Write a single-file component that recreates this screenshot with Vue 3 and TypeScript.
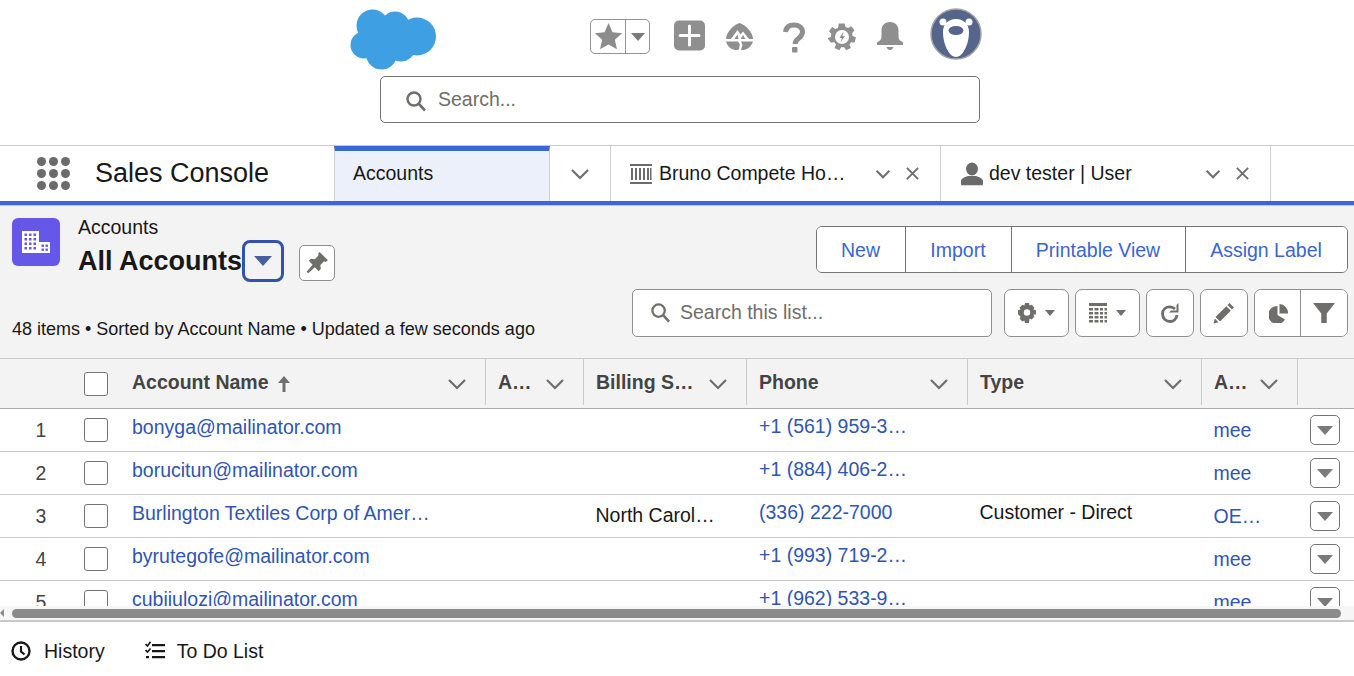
<script setup lang="ts">
// Rows of the accounts list view
interface AccountRow {
  num: number
  name: string
  billing: string
  phone: string
  type: string
  alias: string
}

const rows: AccountRow[] = [
  { num: 1, name: 'bonyga@mailinator.com', billing: '', phone: '+1 (561) 959-3…', type: '', alias: 'mee' },
  { num: 2, name: 'borucitun@mailinator.com', billing: '', phone: '+1 (884) 406-2…', type: '', alias: 'mee' },
  { num: 3, name: 'Burlington Textiles Corp of Amer…', billing: 'North Carol…', phone: '(336) 222-7000', type: 'Customer - Direct', alias: 'OE…' },
  { num: 4, name: 'byrutegofe@mailinator.com', billing: '', phone: '+1 (993) 719-2…', type: '', alias: 'mee' },
  { num: 5, name: 'cubijulozi@mailinator.com', billing: '', phone: '+1 (962) 533-9…', type: '', alias: 'mee' },
]

const columns = ['A…', 'Billing S…', 'Phone', 'Type', 'A…']
const dots = [0, 1, 2, 3, 4, 5, 6, 7, 8]
</script>

<template>
  <div class="page">
    <header class="top">
      <div class="utility">
        <svg class="logo" viewBox="345 4 100 70" width="100" height="70">
          <g fill="#3f9fe3">
            <circle cx="372.5" cy="25.5" r="16" />
            <circle cx="395" cy="26" r="14.5" />
            <circle cx="417" cy="36.5" r="19" />
            <circle cx="364" cy="45" r="13.5" />
            <circle cx="381.5" cy="54" r="15.5" />
            <circle cx="401" cy="47" r="14.5" />
            <rect x="365" y="28" width="45" height="26" />
          </g>
        </svg>
        <div class="fav">
          <span class="fav-star">
            <svg viewBox="0 0 26 26" width="29" height="29"><path d="M13 1l3.6 8.1 8.6.9-6.5 5.9 1.9 8.6L13 20.1l-7.6 4.400 1.900-8.600L.8 10l8.600-.9z" fill="#8c8c8c" /></svg>
          </span>
          <span class="fav-drop"><i class="tri tri-md"></i></span>
        </div>
        <svg class="u-plus" viewBox="0 0 32 32" width="32" height="32">
          <rect x="0" y="0.5" width="31" height="30" rx="5" fill="#8f8f8f" />
          <path d="M15.500 6v19M6 15.500h19" stroke="#fff" stroke-width="3" stroke-linecap="round" />
        </svg>
        <svg class="u-trail" viewBox="0 0 30 30" width="30" height="30">
          <path d="M1 17C1 11 8 3 14.500 1 21 3 28 11 28 17z" fill="#8f8f8f" />
          <path d="M6 17l6.500-9 3 4.500 2.500-3 6 7.500h-3.500L18 13l-2.500 4h-2L12.500 12.500 9.500 17z" fill="#fff" />
          <path d="M1 19.500h12l2 3-1.500 5.500C7 28.500 2.500 25 1 19.500zM16 19.500h12C26.500 25 21 28.500 16 28l1.500-5z" fill="#8f8f8f" />
        </svg>
        <svg class="u-help" viewBox="0 0 24 32" width="24" height="32">
          <path d="M3.500 10C4 5.500 7 3 12 3c5 0 8.500 2.800 8.500 7 0 3.300-2 5-4.300 6.700-2 1.500-3 2.800-3 5.300" fill="none" stroke="#8f8f8f" stroke-width="5" />
          <rect x="10" y="25" width="5.500" height="5.500" rx="1" fill="#8f8f8f" />
        </svg>
        <svg class="u-gear" viewBox="0 0 28 28" width="28" height="28">
          <path d="M11 1h6l.8 3.600 2.700 1.100 3.200-2 3.400 4.300-2.500 2.900.5 2.900 3.400 1.300-1.300 5.300-3.700-.2-1.700 2.400 1.600 3.300-4.900 2.400-2-3.100h-3l-2 3.100-4.900-2.400 1.600-3.300-1.700-2.400-3.700.2L-.5 16l3.400-1.300.5-2.900L.9 8.900l3.400-4.300 3.200 2 2.700-1.100z" fill="#8f8f8f" transform="translate(0 -.5) scale(.98)" />
          <circle cx="14" cy="14" r="7" fill="#fff" />
          <path d="M15.500 8.500l-4 6.500h2.500l-1.500 4.500 4.500-6.500h-2.500z" fill="#8f8f8f" />
        </svg>
        <svg class="u-bell" viewBox="0 0 28 28" width="28" height="28">
          <path d="M14 0c5.500 0 8.500 3.500 8.500 9v6c0 2.500 2 4 4.500 5.500V23H1v-2.500C3.500 19 5.500 17.500 5.500 15V9C5.500 3.500 8.500 0 14 0z" fill="#8f8f8f" />
          <path d="M10.500 25h7c-.5 1.800-2 3-3.500 3s-3-1.200-3.500-3z" fill="#8f8f8f" />
        </svg>
        <svg class="avatar" viewBox="0 0 52 52" width="52" height="52">
          <circle cx="26" cy="26" r="25" fill="#56658c" stroke="#a3a3a3" stroke-width="1.500" />
          <circle cx="13" cy="14" r="3.500" fill="#fff" />
          <circle cx="39" cy="14" r="3.500" fill="#fff" />
          <path d="M26 11c8 0 13 5.500 13 13 0 8-2.500 15-5 19-1.700 3-5 6-8 6s-6.300-3-8-6c-2.500-4-5-11-5-19 0-7.500 5-13 13-13z" fill="#fff" />
          <ellipse cx="26" cy="22.500" rx="7.500" ry="4.500" fill="#56658c" />
        </svg>
      </div>
      <div class="global-search">
        <svg viewBox="0 0 22 22" width="22" height="22"><circle cx="9" cy="9" r="6.500" fill="none" stroke="#706e6b" stroke-width="2.400" /><path d="M14 14l6 6.500" stroke="#706e6b" stroke-width="2.600" /></svg>
        <span>Search...</span>
      </div>
    </header>

    <nav class="nav">
      <div class="launcher">
        <i v-for="d in dots" :key="d"></i>
      </div>
      <div class="app-name">Sales Console</div>
      <div class="tab tab-active">Accounts</div>
      <div class="tab tab-more">
        <svg class="chev" viewBox="0 0 20 12" width="20" height="12"><path d="M2 2l8 8 8-8" /></svg>
      </div>
      <div class="tab tab-record">
        <svg viewBox="0 0 22 22" width="22" height="22" fill="#6b6b6b">
          <path d="M0 1h22v2H0zM0 19h22v2H0zM1 5h2v12H1zM5 5h2v12H5zM9 5h2v12H9zM13 5h2v12h-2zM17 5h2v12h-2zM20 5h1.500v12H20z" />
        </svg>
        <span class="tab-label">Bruno Compete Ho…</span>
        <svg class="chev small" viewBox="0 0 20 12" width="16" height="10"><path d="M2 2l8 8 8-8" /></svg>
        <svg class="close" viewBox="0 0 16 16" width="15" height="15"><path d="M2 2l12 12M14 2L2 14" /></svg>
      </div>
      <div class="tab tab-record">
        <svg viewBox="0 0 24 24" width="24" height="24" fill="#6b6b6b">
          <ellipse cx="12" cy="7" rx="6" ry="6.500" />
          <path d="M1 22v-3c0-2.500 3-3.500 7-5h8c4 1.500 7 2.500 7 5v3c0 .8-.5 1.300-1.300 1.300H2.300C1.500 23.300 1 22.800 1 22z" />
        </svg>
        <span class="tab-label user">dev tester | User</span>
        <svg class="chev small" viewBox="0 0 20 12" width="16" height="10"><path d="M2 2l8 8 8-8" /></svg>
        <svg class="close" viewBox="0 0 16 16" width="15" height="15"><path d="M2 2l12 12M14 2L2 14" /></svg>
      </div>
    </nav>

    <section class="list-head">
      <div class="head-row">
        <div class="entity">
          <svg viewBox="0 0 48 48" width="48" height="48">
            <rect width="48" height="48" rx="6" fill="#6558e8" />
            <path d="M10 13h17v22H10zM27 24h11v11H27z" fill="#fff" />
            <g fill="#6558e8">
              <rect x="12.500" y="15.500" width="2.500" height="2.500" /><rect x="17" y="15.500" width="2.500" height="2.500" /><rect x="21.500" y="15.500" width="2.500" height="2.500" />
              <rect x="12.500" y="20" width="2.500" height="2.500" /><rect x="17" y="20" width="2.500" height="2.500" /><rect x="21.500" y="20" width="2.500" height="2.500" />
              <rect x="12.500" y="24.500" width="2.500" height="2.500" /><rect x="17" y="24.500" width="2.500" height="2.500" /><rect x="21.500" y="24.500" width="2.500" height="2.500" />
              <rect x="12.500" y="29" width="2.500" height="2.500" /><rect x="17" y="29" width="2.500" height="2.500" /><rect x="21.500" y="29" width="2.500" height="2.500" />
              <rect x="29.500" y="26.500" width="2.400" height="2.400" /><rect x="33.500" y="26.500" width="2.400" height="2.400" />
              <rect x="29.500" y="30.500" width="2.400" height="2.400" /><rect x="33.500" y="30.500" width="2.400" height="2.400" />
            </g>
          </svg>
          <div class="titles">
            <div class="crumb">Accounts</div>
            <div class="title-line">
              <h1>All Accounts</h1>
              <button class="view-switch"><i class="tri tri-blue"></i></button>
              <button class="pin">
                <svg viewBox="0 0 22 22" width="24" height="24"><path d="M13.500 1l7.500 7.500-2 1.500-1.500-.5-3.500 3.500.5 3.500-2 2-3.500-3.500L3 20.500l-1.500-1.500 5.500-6.500L3.500 9l2-2 3.500.5L12.500 4l-.5-1.500z" fill="#706e6b" /></svg>
              </button>
            </div>
          </div>
        </div>
        <div class="actions">
          <button>New</button>
          <button>Import</button>
          <button>Printable View</button>
          <button>Assign Label</button>
        </div>
      </div>
      <div class="tool-row">
        <div class="status">48 items • Sorted by Account Name • Updated a few seconds ago</div>
        <div class="tools">
          <div class="list-search">
            <svg viewBox="0 0 22 22" width="21" height="21"><circle cx="9" cy="9" r="6.500" fill="none" stroke="#706e6b" stroke-width="2.400" /><path d="M14 14l6 6.500" stroke="#706e6b" stroke-width="2.600" /></svg>
            <span>Search this list...</span>
          </div>
          <button class="tool wide">
            <svg viewBox="0 0 20 20" width="20" height="20">
              <path d="M8 0h4l.6 2.600 2-.9 2.800 2.800-1 2 2.600.7v4l-2.600.6 1 2-2.800 2.800-2-1L12 20H8l-.6-2.400-2 1-2.800-2.800 1-2L1 11.200v-4l2.600-.7-1-2 2.800-2.800 2 .9z" fill="#706e6b" />
              <circle cx="10" cy="9.500" r="3.200" fill="#fff" />
            </svg>
            <i class="tri tri-sm"></i>
          </button>
          <button class="tool wide">
            <svg viewBox="0 0 20 20" width="20" height="20" fill="#706e6b">
              <path d="M1 0h18v3H1zM1 5h4v2.500H1zM6.500 5h4v2.500h-4zM12 5h3v2.500h-3zM16.500 5H19v2.500h-2.500zM1 9h4v2.500H1zM6.500 9h4v2.500h-4zM12 9h3v2.500h-3zM16.500 9H19v2.500h-2.500zM1 13h4v2.500H1zM6.500 13h4v2.500h-4zM12 13h3v2.500h-3zM16.500 13H19v2.500h-2.500zM1 17h4v2.500H1zM6.500 17h4v2.500h-4zM12 17h3v2.500h-3zM16.500 17H19v2.500h-2.500z" />
            </svg>
            <i class="tri tri-sm"></i>
          </button>
          <button class="tool">
            <svg viewBox="0 0 22 22" width="22" height="22">
              <path d="M18 13c-.5 3.700-3.300 6.500-7 6.500S3.500 16.500 3.500 12 6.800 4.800 11 4.800c2 0 3.500.7 5 2.200" fill="none" stroke="#706e6b" stroke-width="2.800" />
              <path d="M19.500 1v9.500H10l2-2h5.500V3z" fill="#706e6b" />
            </svg>
          </button>
          <button class="tool">
            <svg viewBox="0 0 22 22" width="22" height="22" fill="#706e6b">
              <path d="M16.500 1l4.500 4.500-2 2L14.500 3zM13.300 4.200l4.500 4.500L7 19.500 2.500 15zM1.800 16.500l3.700 3.700L.5 21.500z" />
            </svg>
          </button>
          <div class="tool-pair">
            <button>
              <svg viewBox="0 0 20 20" width="20" height="20" fill="#706e6b">
                <path d="M8.500 3v9l7.500 4.500A9 9 0 1 1 8.500 3zM10.500 1a9 9 0 0 1 8.500 9.500l-8.500 0z" />
              </svg>
            </button>
            <button>
              <svg viewBox="0 0 20 20" width="22" height="22" fill="#706e6b"><path d="M0 1h20l-7.500 9.500V19h-5v-8.500z" /></svg>
            </button>
          </div>
        </div>
      </div>
    </section>

    <section class="grid">
      <div class="row thead">
        <div class="cell"></div>
        <div class="cell"><span class="check"></span></div>
        <div class="cell th">
          <span>Account Name</span>
          <svg class="sort" viewBox="0 0 14 16" width="14" height="16"><path d="M7 0l6 7H8.500v9h-3V7H1z" fill="#706e6b" /></svg>
          <svg class="chev th-chev" viewBox="0 0 20 12" width="20" height="12"><path d="M2 2l8 8 8-8" /></svg>
        </div>
        <div v-for="(col, i) in columns" :key="i" class="cell th">
          <span>{{ col }}</span>
          <svg class="chev th-chev" viewBox="0 0 20 12" width="20" height="12"><path d="M2 2l8 8 8-8" /></svg>
        </div>
        <div class="cell last-head"></div>
      </div>
      <div class="tbody">
        <div v-for="row in rows" :key="row.num" class="row">
          <div class="cell num">{{ row.num }}</div>
          <div class="cell"><span class="check"></span></div>
          <div class="cell text link">{{ row.name }}</div>
          <div class="cell"></div>
          <div class="cell text billing">{{ row.billing }}</div>
          <div class="cell text link phone">{{ row.phone }}</div>
          <div class="cell text phone type">{{ row.type }}</div>
          <div class="cell text link alias">{{ row.alias }}</div>
          <div class="cell"><button class="row-action"><i class="tri tri-md"></i></button></div>
        </div>
      </div>
      <div class="scrollbar">
        <i class="scroll-left"></i>
        <div class="thumb"></div>
      </div>
    </section>

    <footer class="util-bar">
      <div class="util-item">
        <svg viewBox="0 0 20 20" width="20" height="20"><circle cx="10" cy="10" r="8.500" fill="none" stroke="#181818" stroke-width="2.400" /><path d="M10 5v5.500l3.500 3" fill="none" stroke="#181818" stroke-width="2.200" /></svg>
        <span>History</span>
      </div>
      <div class="util-item">
        <svg viewBox="0 0 20 20" width="20" height="20" fill="#181818">
          <path d="M7 3h13v2.200H7zM7 9h13v2.200H7zM7 15h13v2.200H7zM1 15h3v2.200H1z" />
          <path d="M.5 3l2 2L5.500.8" fill="none" stroke="#181818" stroke-width="1.600" />
          <path d="M.5 9l2 2 3-3.500" fill="none" stroke="#181818" stroke-width="1.600" />
        </svg>
        <span>To Do List</span>
      </div>
    </footer>
  </div>
</template>

<style>
html,
body {
  margin: 0;
  background: #fff;
}
</style>

<style scoped>
.page {
  width: 1354px;
  height: 676px;
  overflow: hidden;
  font-family: "Liberation Sans", Arial, sans-serif;
  font-size: 19.5px;
  color: #181818;
  background: #fff;
}

button {
  font-family: inherit;
  font-size: inherit;
  padding: 0;
  background: #fff;
  display: flex;
  align-items: center;
  justify-content: center;
}

.tri {
  display: block;
  width: 0;
  height: 0;
  border-style: solid;
  border-color: #706e6b transparent transparent;
}

.tri-md {
  border-width: 9px 8.5px 0;
  border-top-color: #7a7a7a;
}

.tri-sm {
  border-width: 6px 5.5px 0;
}

.tri-blue {
  border-width: 10px 9px 0;
  border-top-color: #47609f;
}

/* global header */
.top {
  height: 145px;
  border-bottom: 1px solid #c9c9c9;
  box-sizing: content-box;
}

.utility {
  display: flex;
  align-items: flex-start;
  height: 72px;
  padding: 4px 0 0 345px;
}

.fav {
  display: flex;
  width: 60px;
  height: 35px;
  box-sizing: border-box;
  margin: 15px 0 0 145px;
  border: 1px solid #939393;
  border-radius: 5px;
}

.fav-star {
  width: 34px;
  display: flex;
  align-items: center;
  justify-content: center;
  border-right: 1px solid #939393;
}

.fav-drop {
  flex: 1;
  display: flex;
  align-items: center;
  justify-content: center;
}

.fav-drop .tri {
  border-width: 8px 7.5px 0;
}

.u-plus {
  margin: 16px 0 0 24px;
}

.u-trail {
  margin: 18px 0 0 19px;
}

.u-help {
  margin: 18px 0 0 27px;
}

.u-gear {
  margin: 19px 0 0 22px;
}

.u-bell {
  margin: 18px 0 0 20px;
}

.avatar {
  margin: 4px 0 0 26px;
}

.global-search {
  display: flex;
  align-items: center;
  gap: 11px;
  width: 600px;
  height: 47px;
  box-sizing: border-box;
  margin-left: 380px;
  padding-left: 24px;
  border: 1px solid #747474;
  border-radius: 5px;
  color: #706e6b;
}

.global-search svg {
  margin-top: 3px;
}

/* app nav */
.nav {
  display: flex;
  height: 55px;
  border-bottom: 4px solid #3a66d8;
}

.launcher {
  display: grid;
  grid-template-columns: repeat(3, 9px);
  gap: 3px;
  align-content: center;
  width: 33px;
  margin-left: 37px;
}

.launcher i {
  width: 9px;
  height: 9px;
  border-radius: 50%;
  background: #6b6b6b;
}

.app-name {
  width: 239px;
  margin-left: 25px;
  font-size: 27px;
  line-height: 54px;
}

.tab {
  display: flex;
  align-items: center;
  box-sizing: border-box;
  border-right: 1px solid #d0d0d0;
}

.tab-active {
  width: 216px;
  padding: 0 0 6px 18px;
  background: #ebf0fa;
  border-top: 5px solid #3a66d8;
  border-left: 1px solid #d0d0d0;
}

.tab-more {
  width: 61px;
  justify-content: center;
}

.tab-record {
  width: 330px;
  padding-left: 19px;
}

.tab-label {
  width: 216px;
  margin-left: 7px;
  white-space: nowrap;
}

.tab-label.user {
  margin-left: 5px;
}

.chev {
  fill: none;
  stroke: #706e6b;
  stroke-width: 2.200;
}

.chev.small {
  stroke-width: 2.600;
}

.close {
  margin-left: 14px;
  fill: none;
  stroke: #706e6b;
  stroke-width: 2;
}

/* list view header */
.list-head {
  height: 154px;
  box-sizing: border-box;
  padding: 12px 6px 0 12px;
  background: #f3f3f3;
  border-top: 1px solid #c9c9c9;
  border-bottom: 1px solid #c9c9c9;
}

.head-row {
  display: flex;
  justify-content: space-between;
  height: 71px;
}

.entity {
  display: flex;
  gap: 18px;
}

.titles {
  margin-top: -1px;
}

.crumb {
  line-height: 20px;
}

.title-line {
  display: flex;
  align-items: center;
  margin-top: 3px;
  height: 42px;
}

h1 {
  margin: 0;
  font-size: 27px;
  font-weight: 700;
  line-height: 42px;
}

.view-switch {
  width: 42px;
  height: 42px;
  box-sizing: border-box;
  background: transparent;
  border: 3px solid #2f54a8;
  border-radius: 8px;
}

.pin {
  width: 36px;
  height: 36px;
  margin: 4px 0 0 15px;
  box-sizing: border-box;
  border: 1px solid #8f8f8f;
  border-radius: 5px;
}

.actions {
  display: flex;
  height: 47px;
  margin-top: 8px;
  box-sizing: border-box;
  border: 1px solid #747474;
  border-radius: 6px;
  background: #fff;
  overflow: hidden;
}

.actions button {
  border: 0;
  border-right: 1px solid #747474;
  color: #3a66d0;
  padding: 1px 1px 0 0;
}

.actions button:nth-child(1) {
  width: 89px;
}

.actions button:nth-child(2) {
  width: 106px;
}

.actions button:nth-child(3) {
  width: 174px;
}

.actions button:nth-child(4) {
  width: 161px;
  border-right: 0;
}

.tool-row {
  display: flex;
  justify-content: space-between;
  align-items: flex-end;
}

.status {
  font-size: 18px;
  line-height: 22px;
  margin-bottom: -3px;
}

.tools {
  display: flex;
  gap: 6px;
}

.list-search {
  display: flex;
  align-items: center;
  gap: 9px;
  width: 360px;
  height: 48px;
  box-sizing: border-box;
  margin-right: 6px;
  padding: 0 0 2px 17px;
  background: #fff;
  border: 1px solid #8f8f8f;
  border-radius: 5px;
  color: #706e6b;
}

.tool {
  width: 48px;
  height: 48px;
  box-sizing: border-box;
  border: 1px solid #8f8f8f;
  border-radius: 7px;
  gap: 8px;
}

.tool.wide {
  width: 65px;
  padding-right: 2px;
}

.tool-pair {
  display: flex;
  width: 94px;
  height: 48px;
  box-sizing: border-box;
  background: #fff;
  border: 1px solid #8f8f8f;
  border-radius: 7px;
  overflow: hidden;
}

.tool-pair button {
  flex: 1;
  border: 0;
}

.tool-pair button:first-child {
  flex: 0 0 46px;
  padding-left: 3px;
  border-right: 1px solid #8f8f8f;
}

/* table */
.grid {
  height: 263px;
  border-bottom: 2px solid #c9c9c9;
  box-sizing: border-box;
}

.row {
  display: grid;
  grid-template-columns: 70px 50px 366px 98px 163px 221px 234px 96px 56px;
  height: 43px;
  box-sizing: border-box;
  border-bottom: 1px solid #c9c9c9;
}

.thead {
  height: 50px;
  background: #f3f3f3;
  border-bottom: 1px solid #aeaeae;
}

.thead .cell {
  padding-top: 0;
  align-items: center;
}

.tbody {
  height: 197px;
  overflow: hidden;
}

.cell {
  display: flex;
  min-width: 0;
  box-sizing: border-box;
  white-space: nowrap;
}

.cell .check {
  display: block;
  width: 24px;
  height: 24px;
  margin: 9px 0 0 14px;
  box-sizing: border-box;
  background: #fff;
  border: 1px solid #747474;
  border-radius: 3px;
}

.thead .check {
  margin-top: 0;
}

.th {
  padding: 0 18px 0 12px;
  border-right: 1px solid #c9c9c9;
  margin-bottom: 3px;
  font-weight: 700;
  color: #444;
  line-height: 46px;
}

.last-head {
  margin-bottom: 3px;
}

.sort {
  margin: 3px 0 0 8px;
}

.th-chev {
  margin-left: auto;
  margin-top: 3px;
}

.num {
  justify-content: center;
  padding-left: 12px;
  color: #444;
  padding-top: 10px;
  line-height: 22px;
}

.text {
  padding: 7px 0 0 12px;
  line-height: 22px;
}

.link {
  color: #2f55b2;
}

.billing {
  padding: 9px 0 0 11.5px;
}

.phone {
  padding-top: 6px;
}

.type {
  padding-left: 11.5px;
}

.alias {
  padding: 10px 0 0 11.5px;
}

.row-action {
  width: 30px;
  height: 30px;
  margin: 6px 0 0 12px;
  box-sizing: border-box;
  border: 1px solid #747474;
  border-radius: 5px;
}

.scrollbar {
  position: relative;
  height: 14px;
  background: #f6f6f6;
}

.thumb {
  position: absolute;
  left: 12px;
  top: 3px;
  width: 1329px;
  height: 9px;
  border-radius: 5px;
  background: #8a8a8a;
}

.scroll-left {
  position: absolute;
  left: 0;
  top: 3px;
  width: 0;
  height: 0;
  border-style: solid;
  border-width: 4px 4px 4px 0;
  border-color: transparent #8a8a8a transparent transparent;
}

/* bottom utility bar */
.util-bar {
  display: flex;
  align-items: center;
  gap: 40px;
  height: 54px;
  padding: 4px 0 0 11px;
  box-sizing: border-box;
}

.util-item {
  display: flex;
  align-items: center;
  gap: 12px;
}

.util-item:first-child {
  gap: 13px;
}
</style>
